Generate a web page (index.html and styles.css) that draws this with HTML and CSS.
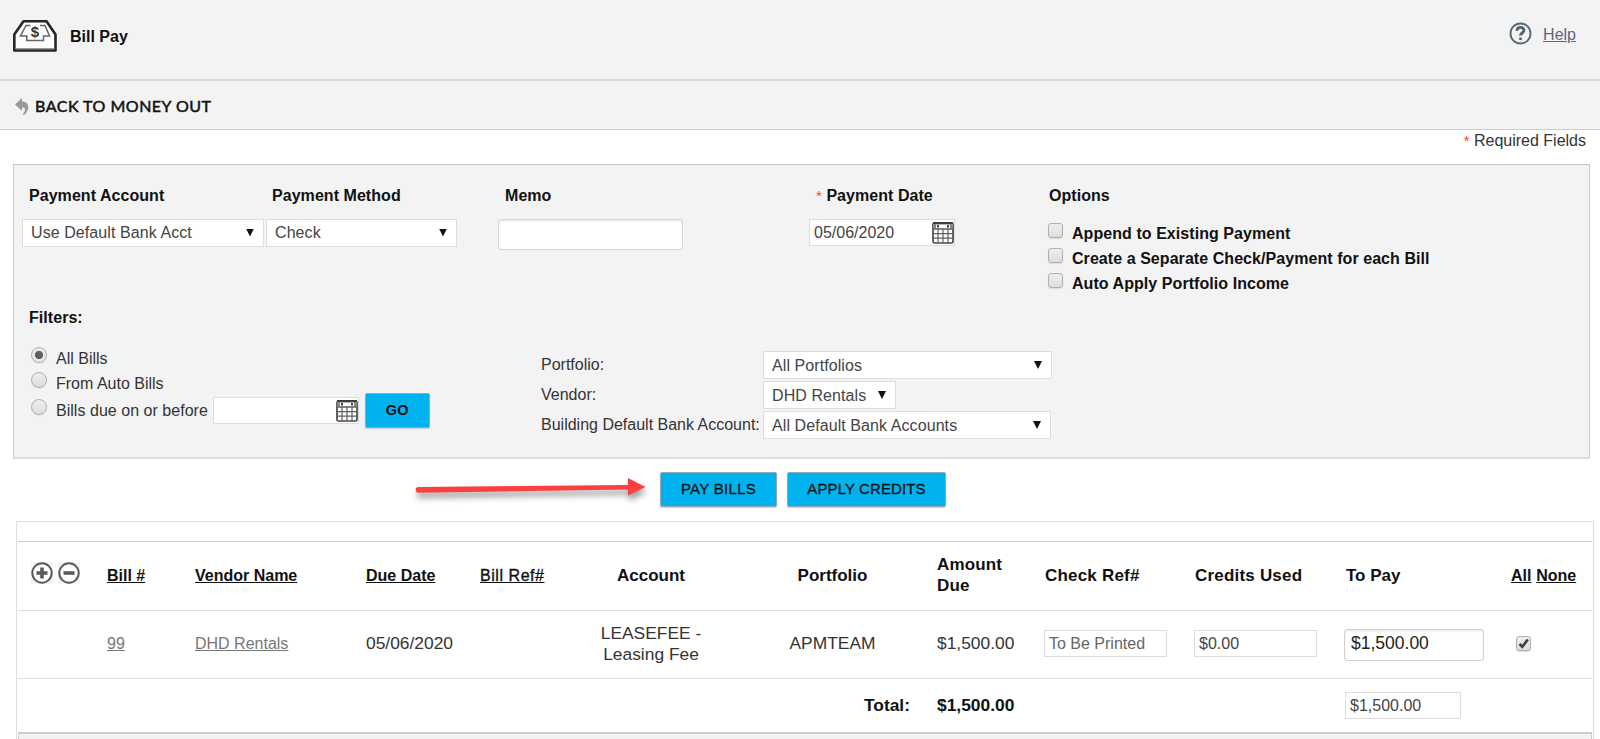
FILE: index.html
```html
<!DOCTYPE html>
<html lang="en">
<head>
<meta charset="utf-8">
<title>Bill Pay</title>
<link rel="stylesheet" href="styles.css">
</head>
<body>
<svg class="defs" width="0" height="0">
  <symbol id="calendar" viewBox="0 0 22 22">
    <rect x="1" y="1" width="20" height="20" rx="1.5" fill="#fff" stroke="#484848" stroke-width="1.7"/>
    <rect x="1" y="1" width="20" height="6" fill="#888"/>
    <rect x="4" y="2.600" width="14" height="3.600" fill="#fff"/>
    <path d="M6 3v2.500M16 3v2.500" stroke="#444" stroke-width="2"/>
    <path d="M1 1H21" stroke="#222" stroke-width="1.4"/>
    <path d="M1 7.200H21M1 11.700H21M1 16.200H21M6 7V21M11 7V21M16 7V21" stroke="#606060" stroke-width="1.200"/>
  </symbol>
</svg>

<header class="header">
  <svg class="logo" width="46" height="34" viewBox="0 0 46 34" fill="none">
    <path d="M2.300 15.500 11.500 2.200H34.500L43.500 15.500V31.500H2.300Z" fill="#fcfcfc" stroke="#262626" stroke-width="2.600" stroke-linejoin="round"/>
    <path d="M3.500 29.500H42.500" stroke="#999"/>
    <path d="M18.500 6.500H14L8.500 17H14.800V21.500H31.500V17H37.500L33 6.500H28" stroke="#666" stroke-width="1.500"/>
    <text x="23" y="17.500" text-anchor="middle" class="logo-sign">$</text>
  </svg>
  <h1 class="title">Bill Pay</h1>
  <div class="help">
    <svg width="23" height="23" viewBox="0 0 23 23" fill="none">
      <circle cx="11.500" cy="11.500" r="10" stroke="#5a6872" stroke-width="1.900"/>
      <path d="M8 8.800C8 4.300 15 4.300 15 8.300C15 10.800 11.500 10.700 11.500 13.600" stroke="#53616b" stroke-width="2.900"/>
      <circle cx="11.500" cy="16.800" r="1.500" fill="#53616b"/>
    </svg>
    <a class="help-link">Help</a>
  </div>
</header>

<nav class="back">
  <svg width="15" height="17" viewBox="0 0 15 17"><path d="M0 6.500 7 0V3.500C13 3.500 16 9 10 16.500H7.500C11 12 11 9.500 7 9.500V13Z" fill="#999"/></svg>
  <a class="back-link">BACK TO MONEY OUT</a>
</nav>

<p class="required"><span class="star">*</span> Required Fields</p>

<section class="panel">
  <div class="top-row">
    <div><h2 class="label account-label">Payment Account</h2><div class="select acct-select">Use Default Bank Acct<i class="arrow"></i></div></div>
    <div><h2 class="label method-label">Payment Method</h2><div class="select">Check<i class="arrow"></i></div></div>
    <div><h2 class="label memo-label">Memo</h2><div class="memo"></div></div>
    <div><h2 class="label date-label"><span class="star">*</span> Payment Date</h2><div class="date">05/06/2020<svg class="cal" width="22" height="22"><use href="#calendar"/></svg></div></div>
    <div><h2 class="label options-label">Options</h2>
      <ul class="options">
        <li><i class="box"></i><span>Append to Existing Payment</span></li>
        <li><i class="box"></i><span>Create a Separate Check/Payment for each Bill</span></li>
        <li><i class="box"></i><span>Auto Apply Portfolio Income</span></li>
      </ul>
    </div>
  </div>

  <h2 class="label filters-label">Filters:</h2>
  <div class="filters">
    <div class="bills">
      <div class="radio-row"><i class="radio checked"></i><span>All Bills</span></div>
      <div class="radio-row"><i class="radio"></i><span>From Auto Bills</span></div>
      <div class="radio-row due-row"><i class="radio"></i><span>Bills due on or before</span><div class="date due-date"><svg class="cal" width="22" height="22"><use href="#calendar"/></svg></div><button class="btn go">GO</button></div>
    </div>
    <div class="lookups">
      <span class="lookup-label">Portfolio:</span><div class="select portfolio">All Portfolios<i class="arrow"></i></div>
      <span class="lookup-label">Vendor:</span><div class="select vendor">DHD Rentals<i class="arrow"></i></div>
      <span class="lookup-label">Building Default Bank Account:</span><div class="select bank">All Default Bank Accounts<i class="arrow"></i></div>
    </div>
  </div>
</section>

<div class="actions">
  <svg class="pointer" width="238" height="36" viewBox="0 0 238 36">
    <path d="M6.500 13 216 11V4L233.500 13 216 21.500V15.500L6.500 18.700A2.800 2.800 0 0 1 6.500 13Z" fill="#fb4040"/>
  </svg>
  <button class="btn pay">PAY BILLS</button>
  <button class="btn apply">APPLY CREDITS</button>
</div>

<section class="table">
  <div class="row head">
    <div class="toggles">
      <svg width="22" height="22" viewBox="0 0 22 22"><rect width="22" height="22" fill="#f3f3f3"/><circle cx="11" cy="11" r="9.700" fill="#fff" stroke="#5a5a5a" stroke-width="2"/><path d="M5.500 11h11M11 5.500v11" stroke="#5a5a5a" stroke-width="3.600"/></svg>
      <svg width="22" height="22" viewBox="0 0 22 22"><rect width="22" height="22" fill="#f3f3f3"/><circle cx="11" cy="11" r="9.700" fill="#fff" stroke="#5a5a5a" stroke-width="2"/><path d="M5.500 11h11" stroke="#5a5a5a" stroke-width="3.600"/></svg>
    </div>
    <a class="sort">Bill #</a>
    <a class="sort">Vendor Name</a>
    <a class="sort">Due Date</a>
    <a class="sort ref">Bill Ref#</a>
    <span class="center">Account</span>
    <span class="center team">Portfolio</span>
    <span class="amount">Amount<br>Due</span>
    <span class="check-head">Check Ref#</span>
    <span class="credits-head">Credits Used</span>
    <span class="pay-head">To Pay</span>
    <span class="picks"><a class="sort">All</a> <a class="sort">None</a></span>
  </div>
  <div class="row item">
    <span></span>
    <a class="link">99</a>
    <a class="link">DHD Rentals</a>
    <span>05/06/2020</span>
    <span></span>
    <span class="center">LEASEFEE -<br>Leasing Fee</span>
    <span class="center team">APMTEAM</span>
    <span>$1,500.00</span>
    <div class="field check-ref">To Be Printed</div>
    <div class="field credits">$0.00</div>
    <div class="field to-pay">$1,500.00</div>
    <i class="box ticked"><svg width="13" height="13" viewBox="0 0 13 13"><path d="M2.500 7 5.300 9.700 10.800 2.500" fill="none" stroke="#404040" stroke-width="2.700"/></svg></i>
  </div>
  <div class="row total">
    <span class="total-label">Total:</span>
    <span>$1,500.00</span>
    <div class="field total-pay">$1,500.00</div>
  </div>
  <div class="footer"></div>
</section>
</body>
</html>
```

FILE: styles.css
```css
* { box-sizing: border-box; }
html { overflow: hidden; }
body { margin: 0; height: 739px; overflow: hidden; background: #fff; color: #222; font: 16px/20px "Liberation Sans", Arial, sans-serif; }
h1, h2, p, ul { margin: 0; padding: 0; font: inherit; }
ul { list-style: none; }
.defs { position: absolute; }

.header { display: flex; align-items: flex-start; height: 81px; padding: 19px 24px 0 12px; background: #f3f3f3; border-bottom: 2px solid #dcdcdc; }
.logo { display: block; margin-right: 12px; }
.logo-sign { font: bold 15px "Liberation Sans", Arial, sans-serif; fill: #333; }
.title { margin-top: 8px; color: #111; font-weight: bold; }
.help { display: flex; margin: 2px 0 0 auto; }
.help svg { margin: 1px 11px 0 0; }
.help-link { margin-top: 4px; color: #5b6872; text-decoration: underline; }

.back { display: flex; height: 49px; padding: 17px 0 0 15px; background: #f3f3f3; border-bottom: 1px solid #ccc; }
.back svg { margin-right: 5px; }
.back-link { margin-top: -2px; color: #111; font: 16px/20px Lato, sans-serif; letter-spacing: .5px; -webkit-text-stroke: .5px #111; }

.required { height: 34px; padding: 1px 14px 0 0; text-align: right; color: #333; }
.star { color: #f04a30; font-weight: normal; font-size: 15px; }

.panel { width: 1577px; height: 295px; margin-left: 13px; background: #f3f3f3; border: 1px solid #c8c8c8; border-bottom: 2px solid #ddd; }
.label { height: 20px; color: #111; font-weight: bold; letter-spacing: .05px; }
.top-row { display: grid; grid-template-columns: 242px 191px 185px 146px 400px; margin: 21px 0 0 8px; height: 122px; }
.top-row > :nth-child(2) { margin-left: 2px; margin-right: -2px; }
.top-row > :nth-child(3) { margin-left: 43px; margin-right: -43px; }
.top-row > :nth-child(4) { margin-left: 169px; margin-right: -169px; }
.top-row > :nth-child(5) { margin-left: 262px; margin-right: -262px; }
.account-label { padding-left: 7px; }
.method-label { padding-left: 6px; }
.memo-label { padding-left: 7px; }
.date-label { padding-left: 7px; }
.top-row .select, .memo, .top-row .date { margin-top: 13px; }
.select { display: flex; align-items: center; justify-content: space-between; height: 28px; padding: 0 9px 0 8px; background: #fff; border: 1px solid #ddd; color: #444; letter-spacing: .08px; }
.lookups .select { padding-top: 1px; }
.arrow { width: 8px; height: 8px; margin-top: -1px; background: #111; clip-path: polygon(0 0, 100% 0, 50% 100%); }
.memo { height: 31px; background: #fff; border: 1px solid #d5d5d5; border-radius: 3px; box-shadow: inset 0 1px 2px #e5e5e5; }
.date { display: flex; align-items: center; justify-content: space-between; width: 146px; height: 27px; padding-left: 4px; background: #fff; border: 1px solid #ddd; color: #444; }
.options { display: grid; row-gap: 5px; padding-top: 18px; color: #111; font-weight: bold; letter-spacing: .06px; }
.options li { display: flex; height: 20px; }
.options .box { margin: -1px 9px 0 0; }
.options-label { padding-left: 1px; }
.box { width: 15px; height: 15px; border: 1px solid #b0b0b0; border-radius: 3px; background: linear-gradient(#eee, #ddd); box-shadow: 0 1px 1px #ddd; }

.filters-label { padding-left: 15px; }
.filters { display: flex; height: 120px; }
.bills { width: 527px; padding: 19px 0 0 17px; }
.radio-row { display: flex; align-items: flex-start; height: 25px; color: #333; }
.radio { width: 16px; height: 16px; margin-right: 9px; border: 1px solid #b0b0b0; border-radius: 50%; background: linear-gradient(#eee, #ddd); box-shadow: 0 1px 1px #e4e4e4; }
.radio.checked { background: radial-gradient(circle, #606060 3.700px, #e8e8e8 4.500px); }
.radio-row span { margin-top: 2px; }
.due-row .radio { margin-top: 2px; }
.due-row span { margin-top: 4px; letter-spacing: .03px; }
.due-date { margin: 0 6px 0 5px; justify-content: flex-end; }
.btn { height: 35px; padding: 0 0 1px; border: 1px solid #93a9b8; border-radius: 2px; background: #00b2ee; color: #111; font: 15px/32px "Liberation Sans", Arial, sans-serif; -webkit-text-stroke: .3px #111; box-shadow: 0 1px 1px #ccd; letter-spacing: .3px; }
.go { width: 65px; margin-top: -4px; font-weight: bold; font-size: 14.500px; -webkit-text-stroke: 0; }
.lookups { display: grid; grid-template-columns: 222px 289px; grid-auto-rows: 28px; row-gap: 2px; padding-top: 23px; }
.lookup-label { padding-top: 3.500px; color: #333; }
.vendor { width: 133px; }
.bank { width: 288px; }

.actions { display: flex; height: 62px; padding: 13px 0 0 412px; }
.pointer { margin: 2px 10px 0 0; overflow: visible; filter: drop-shadow(1px 5px 3px #999); }
.pay { width: 117px; }
.apply { width: 159px; margin-left: 10px; letter-spacing: .1px; }

.table { width: 1578px; height: 230px; margin-left: 16px; padding: 19px 1px 0; border: 1px solid #ddd; }
.row { display: grid; grid-template-columns: 89px 88px 171px 114px 103px 136px 218px 108px 150px 150px 165px 82px; align-items: center; height: 69px; padding-bottom: 2px; border-top: 1px solid #ccc; color: #333; font-size: 17.400px; line-height: 21px; }
.row.head { color: #111; font-size: 17px; font-weight: bold; }
.row.item { height: 68px; border-color: #ddd; }
.sort { font-size: 16px; text-decoration: underline; }
.ref { font-weight: normal; -webkit-text-stroke: .35px #111; letter-spacing: .55px; }
.toggles { display: flex; gap: 5px; padding: 0 0 4px 13px; }
.center { text-align: center; }
.team { padding-left: 9px; }
.check-head, .credits-head { letter-spacing: .2px; }
.pay-head { padding-left: 1px; }
.picks { padding-left: 1px; white-space: nowrap; }
.amount { letter-spacing: .15px; }
.link { color: #777; text-decoration: underline; font-size: 16px; }
.field { display: flex; align-items: center; height: 27px; padding-left: 4px; border: 1px solid #ddd; background: #fff; color: #444; font-size: 16px; }
.check-ref { width: 123px; color: #666; }
.credits { width: 123px; }
.to-pay { width: 140px; height: 32px; padding-left: 6px; border: 1px solid #d0d0d0; border-radius: 3px; box-shadow: inset 0 1px 2px #e5e5e5; color: #222; font-size: 17.500px; }
.item .field { margin-left: -1px; }
.row.item .to-pay { padding-bottom: 2px; margin-top: 2px; }
.ticked { display: block; margin-left: 6px; }
.ticked svg { display: block; }
.row.total { grid-template-columns: 892px 27px 408px 247px; height: 54px; padding-bottom: 1px; border-color: #ddd; color: #111; font-weight: bold; }
.row.total > :nth-child(2) { grid-column: 3; }
.total-label { text-align: right; }
.total-pay { width: 116px; font-weight: normal; }
.footer { height: 20px; background: #f2f2f2; border: 1px solid #ccc; border-top-width: 2px; }
```
